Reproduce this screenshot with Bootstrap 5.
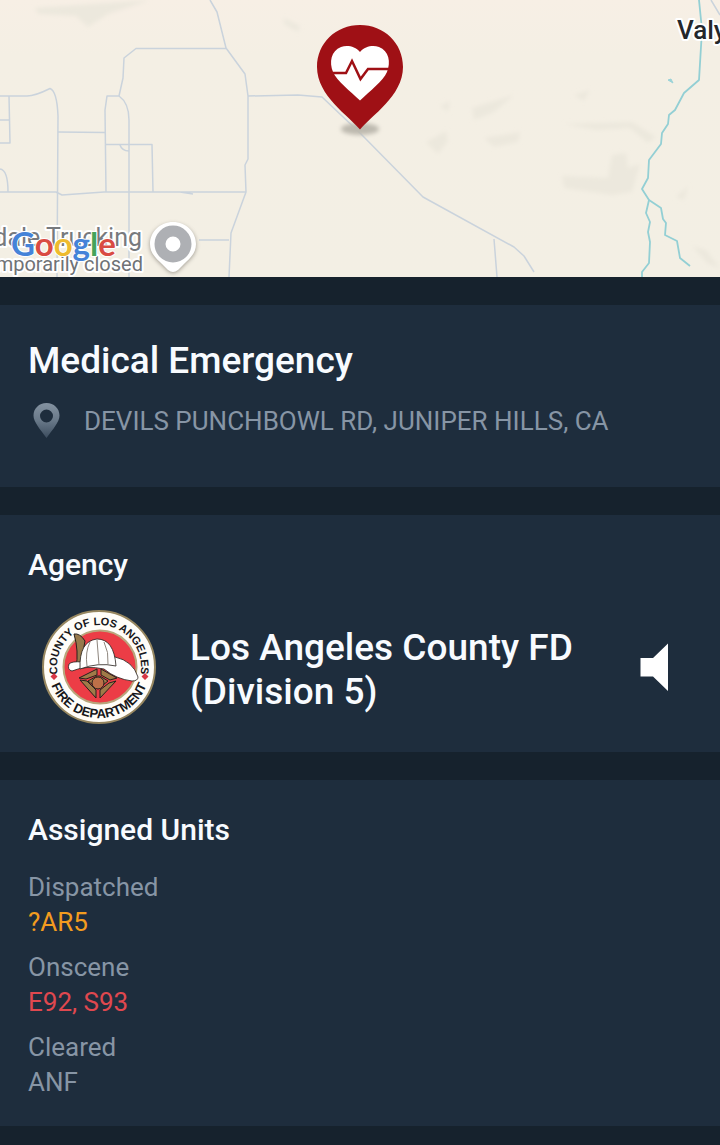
<!DOCTYPE html>
<html lang="en">
<head>
<meta charset="utf-8">
<meta name="viewport" content="width=device-width, initial-scale=1">
<title>Medical Emergency</title>
<link href="https://cdn.jsdelivr.net/npm/bootstrap@5.3.0/dist/css/bootstrap.min.css" rel="stylesheet">
<style>
  body { background: #16222d; color: #f8fbff; font-family: Roboto, "Liberation Sans", sans-serif; font-size: 26px; line-height: 36px; }
  .incident-map { background: #f4efe4; }
  .panel { background: #1e2d3d; padding: 32px 28px 26px; }
  .title-xl { font-size: 37px; line-height: 48px; font-weight: 500; margin-bottom: 18px; }
  .title-md { font-size: 30px; line-height: 36px; font-weight: 500; margin-bottom: 22px; }
  .agency-name { font-size: 37px; line-height: 44px; font-weight: 500; padding-top: 6px; }
  .muted { color: #8795a5; }
  .dispatched { color: #f39c1f; }
  .onscene { color: #e0484f; }
  .stack { gap: 28px; padding-bottom: 18px; }
  .address { gap: 20px; padding-bottom: 22px; }
  .agency-row { gap: 32px; padding: 3px 18px 0 12px; }
  .unit-list dt { font-weight: 400; line-height: 35px; }
  .unit-list dd { margin-bottom: 10px; line-height: 35px; }
</style>
</head>
<body>
<main class="d-flex flex-column stack">
  <section class="incident-map" aria-label="Incident map">
    <svg class="d-block w-100 h-auto" viewBox="0 0 720 277">
      <defs>
        <filter id="soft" x="-30%" y="-60%" width="160%" height="220%"><feGaussianBlur stdDeviation="2"/></filter>
        <linearGradient id="haze" x2="0" y2="1"><stop offset="0" stop-color="#f7efe5"/><stop offset=".2" stop-color="#f4efe4"/><stop offset="1" stop-color="#f3efe4"/></linearGradient>
      </defs>
      <rect width="720" height="277" fill="url(#haze)"/>
      <!-- hills -->
      <g fill="#ece8dd" filter="url(#soft)">
        <path d="M35 8L150 0 108 14 88 27 76 16 38 14Z"/>
        <path d="M472 108L514 95 494 112 474 120ZM426 142L446 131 448 141 438 154ZM484 138L520 132 518 142 494 147ZM574 95L590 90 584 101ZM564 124L632 122 656 137 648 143 630 128 596 130ZM562 176L608 178 612 155 626 153 628 168 640 164 632 192 612 195 564 188ZM440 106L450 101 448 112ZM284 18L300 26 298 32 284 24ZM676 197L688 186 684 200ZM692 246L706 250 720 268 708 264Z"/>
      </g>
      <!-- roads -->
      <g fill="none" stroke="#cad3dc" stroke-width="1.5" stroke-linejoin="round">
        <path d="M210 0L217 12 226 48 245 74 248 96V159L245 165 246 192 231 233 229 277"/>
        <path d="M226 48.500H136L124 58 123 78 119 96H107L105 110 106 192"/>
        <path d="M119 96Q129 103 129 120V277"/>
        <path d="M0 96H27Q35 96 50 88.500Q57 91 58 116L57 277"/>
        <path d="M58 132L105 132.500M106 144.500H152L153 192M120 145Q122 151 129 151M9 96L10 143H0M0 120H9M0 169Q8 170 8 192"/>
        <path d="M0 192H56L62 195 104 192H246M180 192L193 194M199 240H229"/>
        <path d="M248 96L298 95 322 97 360 133 423 197 514 247 524 256 534 272M494 239L497 277M711 0L720 15"/>
      </g>
      <!-- creek -->
      <g fill="none" stroke="#93cfd4" stroke-width="1.800" stroke-linejoin="round">
        <path d="M699 0L702 30 699 80 684 93 675 110 669 115 668 124 662 133 661 144 649 160 648 178 642 189 649 200 646 213 650 222 648 232 650 242 649 263 642 272V277"/>
        <path d="M649 200L661 208 663 219 666 223 665 235 677 241 680 258 690 266"/>
      </g>
      <path d="M668 80L671 79 673 83Z" fill="#9bd3d8" stroke="#9bd3d8"/>
      <!-- place names -->
      <g font-family="Roboto, sans-serif" paint-order="stroke" stroke="#fff" stroke-width="4" stroke-linejoin="round">
        <text x="677" y="39" font-size="26" font-weight="500" fill="#24272b">Valy</text>
        <text x="142" y="246" text-anchor="end" font-size="25" fill="#777a7e">dale Trucking</text>
        <text x="143" y="271" text-anchor="end" font-size="20" fill="#6f7276">mporarily closed</text>
        <text x="11" y="256" font-family="Lato, sans-serif" font-size="33" font-weight="700" stroke-width="2"><tspan fill="#4583d8">G</tspan><tspan fill="#d94b43">o</tspan><tspan fill="#eebb2e">o</tspan><tspan fill="#4583d8">g</tspan><tspan fill="#45a35a">l</tspan><tspan fill="#d94b43">e</tspan></text>
      </g>
      <!-- place marker -->
      <path d="M173 224C160 224 150 233 150 245C150 255 157 260 162 265L168 271Q173 275 178 271L184 265C189 260 196 255 196 245C196 233 186 224 173 224Z" fill="#77736b" opacity=".7" filter="url(#soft)"/>
      <path d="M173 222C160 222 150 232 150 244C150 254 157 259 162 264L168 270Q173 274 178 270L184 264C189 259 196 254 196 244C196 232 186 222 173 222Z" fill="#fff"/>
      <circle cx="173" cy="244" r="13" fill="#fff" stroke="#aeb0b4" stroke-width="11"/>
      <!-- incident marker -->
      <ellipse cx="360" cy="129" rx="19" ry="6" fill="#bdb9af" filter="url(#soft)"/>
      <path d="M360 129.500C349 116 317 96 317 67C317 43 336 25 360 25S403 43 403 67C403 96 371 116 360 129.500Z" fill="#9f1015"/>
      <path d="M360 52C355 46 347 45 341 47C331 51 329 62 333 72C337 81 350 91 360 100.500C370 91 383 81 387 72C391 62 389 51 379 47C373 45 365 46 360 52Z" fill="#fff"/>
      <path d="M330 73H346L352 61 360.500 79 368 69H390" fill="none" stroke="#9f1015" stroke-width="2.500"/>
    </svg>
  </section>

  <section class="panel">
    <h1 class="title-xl">Medical Emergency</h1>
    <div class="d-flex align-items-start address muted">
      <svg width="36" height="36" viewBox="0 0 36 36" aria-hidden="true" class="flex-shrink-0">
        <defs><linearGradient id="pin" x2="0" y2="1"><stop offset="0" stop-color="#8492a1"/><stop offset=".5" stop-color="#697989"/><stop offset="1" stop-color="#3c4c5e"/></linearGradient></defs>
        <path fill="url(#pin)" fill-rule="evenodd" d="M18.500 0C11 0 5.500 5.500 5.500 12.500C5.500 19 12 26 18.500 35C25 26 31.500 19 31.500 12.500C31.500 5.500 26 0 18.500 0ZM18.500 6.500A6.500 6.500 0 1 1 18.500 19.500A6.500 6.500 0 1 1 18.500 6.500Z"/>
      </svg>
      <span>DEVILS PUNCHBOWL RD, JUNIPER HILLS, CA</span>
    </div>
  </section>

  <section class="panel">
    <h2 class="title-md">Agency</h2>
    <div class="d-flex align-items-center agency-row">
      <svg width="118" height="118" viewBox="0 0 118 118" class="flex-shrink-0" role="img" aria-label="County of Los Angeles Fire Department seal">
        <defs>
          <path id="arcTop" d="M59 101A42 42 0 0 1 59 17A42 42 0 0 1 59 101"/>
          <path id="arcLow" d="M59 8A51 51 0 0 0 59 110A51 51 0 0 0 59 8"/>
        </defs>
        <circle cx="59" cy="59" r="56" fill="#fffdf8" stroke="#978760" stroke-width="2"/>
        <circle cx="60" cy="59" r="36.500" fill="#ec3d46" stroke="#b9a67c" stroke-width="2"/>
        <g font-family="'Liberation Sans', sans-serif" font-weight="700" fill="#17171a" text-anchor="middle">
          <text font-size="11"><textPath href="#arcTop" startOffset="50%">COUNTY OF LOS ANGELES</textPath></text>
          <text font-size="13"><textPath href="#arcLow" startOffset="50%">FIRE DEPARTMENT</textPath></text>
        </g>
        <path d="M14 65L17.500 68.500 14 72 10.500 68.500ZM105 65L108.500 68.500 105 72 101.500 68.500Z" fill="#d73745"/>
        <g stroke="#26201c" stroke-linejoin="round">
          <path d="M34 26Q40 25 45 33L40 60 36 60Q39 43 34 26Z" fill="#96794b"/>
          <path d="M29 56Q27 62 32 63Q46 57 64 61Q76 71 92 73Q98 73 98 69Q93 53 75 49L42 54Q32 53 29 56Z" fill="#fff" stroke-width=".8"/>
          <path d="M40 61Q39 33 57 31Q74 31 76 58Q58 54 40 61Z" fill="#fff" stroke-width=".8"/>
          <path d="M57 32L59 57M50 34Q45 44 47 58M64 34Q69 44 68 56" fill="none" stroke="#8e867e"/>
          <g fill="#a07a48" stroke-width="1">
            <path d="M39 70L57 61 57 67 46 71ZM61 61L77 70 70 72 61 67ZM40 72L47 73 56 82 56 90ZM76 73L69 75 60 82 60 90Z"/>
            <path d="M48 73L57 68 60 68 68 73 58 81Z"/>
            <circle cx="58" cy="75" r="6" fill="#bd7048"/>
          </g>
        </g>
      </svg>
      <div class="agency-name flex-grow-1">Los Angeles County FD (Division&nbsp;5)</div>
      <button type="button" class="btn p-0 border-0 flex-shrink-0" aria-label="Play agency audio">
        <svg class="d-block" width="40" height="52" viewBox="0 0 40 52"><path d="M6.500 17H19L34 2.500V50L19 35.500H6.500Z" fill="#fff"/></svg>
      </button>
    </div>
  </section>

  <section class="panel">
    <h2 class="title-md">Assigned Units</h2>
    <dl class="unit-list muted mb-0">
      <dt>Dispatched</dt>
      <dd class="dispatched">?AR5</dd>
      <dt>Onscene</dt>
      <dd class="onscene">E92, S93</dd>
      <dt>Cleared</dt>
      <dd class="mb-0">ANF</dd>
    </dl>
  </section>
</main>
<script src="https://cdn.jsdelivr.net/npm/bootstrap@5.3.0/dist/js/bootstrap.bundle.min.js"></script>
</body>
</html>
